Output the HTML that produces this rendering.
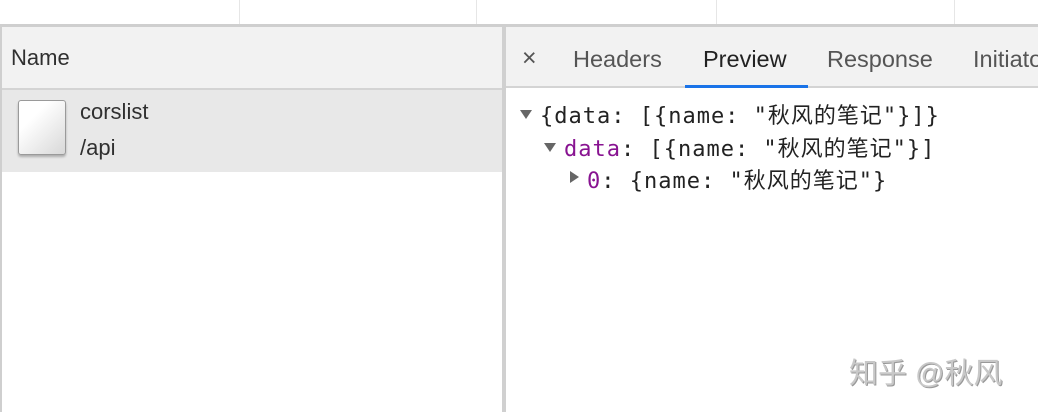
<!DOCTYPE html>
<html><head><meta charset="utf-8"><style>
*{margin:0;padding:0;box-sizing:border-box}
body{width:1038px;height:412px;background:#fff;position:relative;overflow:hidden;font-family:"Liberation Sans","Noto Sans CJK SC",sans-serif;color:#303030}
.a{position:absolute}
.mono{font-family:"DejaVu Sans Mono","Liberation Mono","Noto Sans CJK SC",monospace;font-size:22px;letter-spacing:1px;color:#222;white-space:pre}
</style></head><body>
<div class="a" style="left:239px;top:0;width:1px;height:25px;background:#e6e6e6"></div>
<div class="a" style="left:476px;top:0;width:1px;height:25px;background:#e6e6e6"></div>
<div class="a" style="left:716px;top:0;width:1px;height:25px;background:#e6e6e6"></div>
<div class="a" style="left:954px;top:0;width:1px;height:25px;background:#e6e6e6"></div>
<div class="a" style="left:0;top:24px;width:1038px;height:3px;background:#cfcfcf"></div>
<div class="a" style="left:0;top:27px;width:2px;height:385px;background:#cfcfcf"></div>
<div class="a" style="left:2px;top:27px;width:500px;height:61px;background:#f2f2f2"></div>
<div class="a" style="left:11px;top:45px;font-size:22px">Name</div>
<div class="a" style="left:2px;top:88px;width:500px;height:2px;background:#d4d4d4"></div>
<div class="a" style="left:2px;top:90px;width:500px;height:82px;background:#e8e8e8"></div>
<div class="a" style="left:18px;top:100px;width:48px;height:55px;border:1px solid #9a9a9a;border-radius:3px;background:linear-gradient(135deg,#fff 30%,#d8d8d8);box-shadow:0 2px 2px rgba(0,0,0,.25)"></div>
<div class="a" style="left:80px;top:99px;font-size:22px">corslist</div>
<div class="a" style="left:80px;top:135px;font-size:22px">/api</div>
<div class="a" style="left:502px;top:27px;width:4px;height:385px;background:#d0d0d0"></div>
<div class="a" style="left:506px;top:27px;width:532px;height:59px;background:#f2f2f2"></div>
<div class="a" style="left:506px;top:86px;width:532px;height:2px;background:#d4d4d4"></div>
<div class="a" style="left:522px;top:44px;font-size:25px;color:#555">×</div>
<div class="a" style="left:573px;top:46px;font-size:23.5px;color:#555">Headers</div>
<div class="a" style="left:703px;top:46px;font-size:23.5px;color:#222">Preview</div>
<div class="a" style="left:685px;top:85px;width:123px;height:3px;background:#1a73e8"></div>
<div class="a" style="left:827px;top:46px;font-size:23.5px;color:#555">Response</div>
<div class="a" style="left:973px;top:46px;font-size:23.5px;color:#555;white-space:nowrap">Initiator</div>
<div class="a" style="left:520px;top:110px;width:0;height:0;border-left:6px solid transparent;border-right:6px solid transparent;border-top:9px solid #666"></div>
<div class="a mono" style="left:540px;top:98px">{data: [{name: "秋风的笔记"}]}</div>
<div class="a" style="left:544px;top:143px;width:0;height:0;border-left:6px solid transparent;border-right:6px solid transparent;border-top:9px solid #666"></div>
<div class="a mono" style="left:564px;top:131px"><span style="color:#881391">data</span>: [{name: "秋风的笔记"}]</div>
<div class="a" style="left:570px;top:171px;width:0;height:0;border-top:6px solid transparent;border-bottom:6px solid transparent;border-left:9px solid #666"></div>
<div class="a mono" style="left:587px;top:163px"><span style="color:#881391">0</span>: {name: "秋风的笔记"}</div>
<div class="a" style="left:849px;top:350px;font-size:29px;color:#c8c8c8;white-space:nowrap;text-shadow:1px 1px 0 #999">知乎 @秋风</div>
</body></html>
